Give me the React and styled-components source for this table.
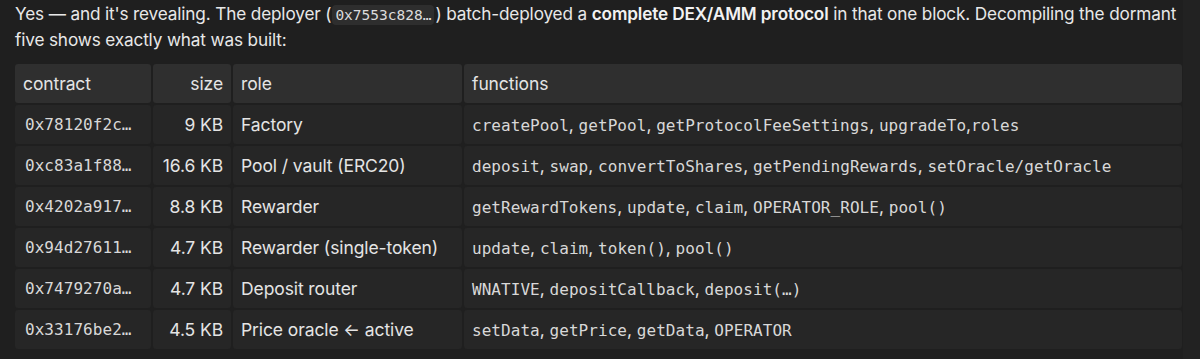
import styled, { createGlobalStyle } from "styled-components";

const GlobalStyle = createGlobalStyle`
  html, body {
    margin: 0;
    padding: 0;
    background: #1f1f1f;
  }
`;

const Page = styled.div`
  display: grid;
  grid-template-columns: 1183px 1fr;
  min-height: 359px;
  font-family: Inter, "Noto Sans", sans-serif;
  color: #e6e6e6;
`;

const Main = styled.div`
  padding: 1px 1px 0 15px;
`;

const Gutter = styled.div`
  background: #222222;
`;

const Para = styled.p`
  margin: 0 0 11px;
  font-size: 17.2px;
  line-height: 26px;
  letter-spacing: -0.15px;
  color: #e8e8e8;
`;

const Strong = styled.strong`
  font-weight: 600;
  color: #f2f2f2;
`;

const InlineCode = styled.code`
  font-family: "DejaVu Sans Mono", "Liberation Mono", monospace;
  font-size: 14.5px;
  line-height: 20px;
  letter-spacing: 0;
  background: #2e2e2e;
  border-radius: 4px;
  padding: 2px 3px;
  margin: 0 1px;
  color: #dcdcdc;
`;

const Table = styled.div`
  display: grid;
  gap: 2px;
`;

const Row = styled.div`
  display: grid;
  grid-template-columns: 136px 78px 229px 1fr;
  gap: 2px;
`;

const Cell = styled.div`
  height: 39px;
  display: flex;
  align-items: center;
  justify-content: ${(p) => (p.$right ? "flex-end" : "flex-start")};
  padding: 0 8px;
  border-radius: 3px;
  background: ${(p) => (p.$head ? "#2f2f2f" : "#262626")};
  font-size: 17.5px;
  letter-spacing: -0.1px;
  color: #e4e4e4;
  white-space: pre;
  overflow: hidden;
`;

const Mono = styled.span`
  font-family: "DejaVu Sans Mono", "Liberation Mono", monospace;
  font-size: 16px;
  letter-spacing: 0.05px;
  color: #d8d8d8;
`;

const AddrCell = styled(Cell)`
  padding-left: 10px;
`;

const rows = [
  {
    addr: "0x78120f2c…",
    size: "9 KB",
    role: "Factory",
    fns: [["createPool", ", "], ["getPool", ", "], ["getProtocolFeeSettings", ", "], ["upgradeTo", ","], ["roles", ""]],
  },
  {
    addr: "0xc83a1f88…",
    size: "16.6 KB",
    role: "Pool / vault (ERC20)",
    fns: [["deposit", ", "], ["swap", ", "], ["convertToShares", ", "], ["getPendingRewards", ", "], ["setOracle/getOracle", ""]],
  },
  {
    addr: "0x4202a917…",
    size: "8.8 KB",
    role: "Rewarder",
    fns: [["getRewardTokens", ", "], ["update", ", "], ["claim", ", "], ["OPERATOR_ROLE", ", "], ["pool()", ""]],
  },
  {
    addr: "0x94d27611…",
    size: "4.7 KB",
    role: "Rewarder (single-token)",
    fns: [["update", ", "], ["claim", ", "], ["token()", ", "], ["pool()", ""]],
  },
  {
    addr: "0x7479270a…",
    size: "4.7 KB",
    role: "Deposit router",
    fns: [["WNATIVE", ", "], ["depositCallback", ", "], ["deposit(…)", ""]],
  },
  {
    addr: "0x33176be2…",
    size: "4.5 KB",
    role: "Price oracle ← active",
    fns: [["setData", ", "], ["getPrice", ", "], ["getData", ", "], ["OPERATOR", ""]],
  },
];

export default function App() {
  return (
    <>
      <GlobalStyle />
      <Page>
        <Main>
          <Para>
            Yes — and it's revealing. The deployer (<InlineCode>0x7553c828…</InlineCode>) batch-deployed a{" "}
            <Strong>complete DEX/AMM protocol</Strong> in that one block. Decompiling the dormant five shows
            exactly what was built:
          </Para>
          <Table>
            <Row>
              <Cell $head>contract</Cell>
              <Cell $head $right>size</Cell>
              <Cell $head>role</Cell>
              <Cell $head>functions</Cell>
            </Row>
            {rows.map((r) => (
              <Row key={r.addr}>
                <AddrCell>
                  <Mono>{r.addr}</Mono>
                </AddrCell>
                <Cell $right>{r.size}</Cell>
                <Cell>{r.role}</Cell>
                <Cell>
                  <span>
                    {r.fns.map(([name, sep]) => (
                      <span key={name}>
                        <Mono>{name}</Mono>
                        {sep}
                      </span>
                    ))}
                  </span>
                </Cell>
              </Row>
            ))}
          </Table>
        </Main>
        <Gutter />
      </Page>
    </>
  );
}
